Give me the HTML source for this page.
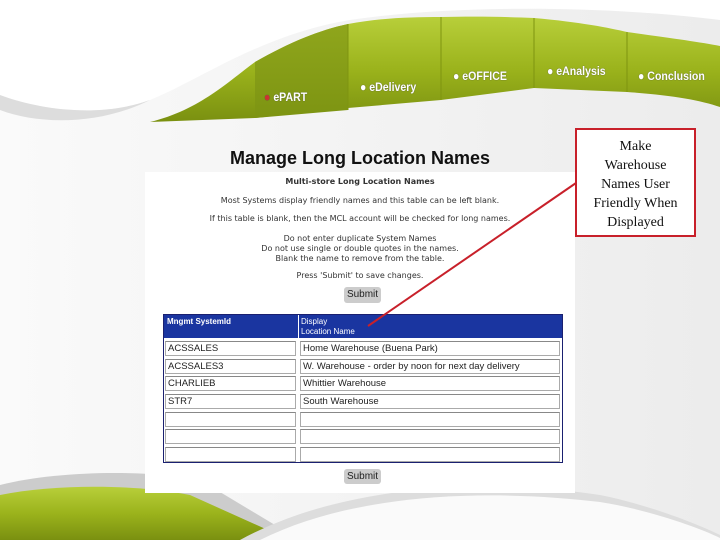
<!DOCTYPE html>
<html><head><meta charset="utf-8"><style>
*{margin:0;padding:0;box-sizing:border-box}
body{width:720px;height:540px;overflow:hidden;background:#fff;position:relative;font-family:"Liberation Sans",sans-serif}
.abs{position:absolute}
.tab{position:absolute;color:#fff;font-size:12px;font-weight:bold;text-shadow:0 0 1px #444;transform:scaleX(.88);transform-origin:left center}
.panel{position:absolute;left:145px;top:172px;width:430px;height:321px;background:#fff}
.c{text-align:center;font-family:"DejaVu Sans",sans-serif;font-size:8px;color:#333;position:absolute;left:0;width:430px}
.btn{position:absolute;background:#ccc;border-radius:3px;font-size:10px;text-align:center;color:#222}
.inp{position:absolute;border:1px solid #aaa;border-top-color:#888;background:#fff;font-size:9.5px;color:#222;padding-left:2px;height:15px;line-height:13px}
</style></head><body>
<svg class="abs" style="left:0;top:0" width="720" height="540">
<defs>
<linearGradient id="g" x1="0" y1="0" x2="0" y2="1"><stop offset="0" stop-color="#b8cf3a"/><stop offset=".5" stop-color="#9bb31c"/><stop offset="1" stop-color="#7a9010"/></linearGradient>
<linearGradient id="gd" x1="0" y1="0" x2="0" y2="1"><stop offset="0" stop-color="#8fa61c"/><stop offset="1" stop-color="#7d9412"/></linearGradient>
<linearGradient id="bg" x1="0" y1="0" x2="1" y2="0"><stop offset="0" stop-color="#fafafa"/><stop offset="1" stop-color="#ececec"/></linearGradient>
</defs>
<rect width="720" height="540" fill="url(#bg)"/>
<path d="M0 0 L720 0 L720 20 C600 5 450 5 350 20 C260 35 200 80 150 100 C100 118 40 110 0 95Z" fill="#fff"/>
<path d="M0 95 C40 110 100 118 150 100 C100 125 40 125 0 110Z" fill="#ddd"/>
<path d="M150 122 C200 110 230 80 255 62 C290 42 320 30 348 24 C380 18 410 17 441 17 C480 16 510 17 534 18 C580 22 610 28 627 32 C670 38 700 42 720 46 L720 107 C700 100 670 95 627 92 L534 88 L441 100 L348 108 L255 118Z" fill="url(#g)"/>
<path d="M255 62 C290 42 320 30 348 24 L348 110 L255 118Z" fill="url(#gd)"/>
<g stroke="#7e9410" stroke-width="1"><line x1="348" y1="24" x2="348" y2="110"/><line x1="441" y1="17" x2="441" y2="100"/><line x1="534" y1="18" x2="534" y2="88"/><line x1="627" y1="32" x2="627" y2="92"/></g>
<path d="M0 485 C60 470 150 470 200 480 L300 540 L0 540Z" fill="#ccc"/>
<path d="M0 495 C60 483 140 485 190 495 L290 540 L0 540Z" fill="url(#g)"/>
<path d="M240 540 C350 480 500 480 600 495 C650 505 700 525 720 535 L720 540Z" fill="#ddd"/>
<path d="M260 540 C360 490 500 490 600 502 C650 510 700 528 720 538 L720 540Z" fill="#fafafa"/>
</svg>
<div class="tab" style="left:264px;top:90px"><span style="color:#c33">●</span> ePART</div>
<div class="tab" style="left:360px;top:80px">● eDelivery</div>
<div class="tab" style="left:453px;top:69px">● eOFFICE</div>
<div class="tab" style="left:547px;top:64px">● eAnalysis</div>
<div class="tab" style="left:638px;top:69px">● Conclusion</div>
<div class="abs" style="left:230px;top:148px;font-size:18px;font-weight:bold;color:#111">Manage Long Location Names</div>
<div class="panel">
<div class="c" style="top:5px;font-weight:bold">Multi-store Long Location Names</div>
<div class="c" style="top:24px">Most Systems display friendly names and this table can be left blank.</div>
<div class="c" style="top:42px">If this table is blank, then the MCL account will be checked for long names.</div>
<div class="c" style="top:62px;line-height:10px">Do not enter duplicate System Names<br>Do not use single or double quotes in the names.<br>Blank the name to remove from the table.</div>
<div class="c" style="top:99px">Press 'Submit' to save changes.</div>
<div class="btn" style="left:199px;top:115px;width:37px;height:16px;line-height:16px">Submit</div>
<div class="abs" style="left:18px;top:142px;width:400px;height:149px;border:1px solid #1a2070"></div>
<div class="abs" style="left:19px;top:143px;width:398px;height:23px;background:#1a35a0"></div>
<div class="abs" style="left:153px;top:143px;width:1px;height:23px;background:#fff"></div>
<div class="abs" style="left:22px;top:145px;font-size:8px;color:#fff;font-weight:bold">Mngmt SystemId</div>
<div class="abs" style="left:156px;top:145px;font-size:8px;color:#fff;line-height:10px">Display<br>Location Name</div>
<div class="inp" style="left:20px;top:169px;width:131px">ACSSALES</div><div class="inp" style="left:155px;top:169px;width:260px">Home Warehouse (Buena Park)</div>
<div class="inp" style="left:20px;top:187px;width:131px">ACSSALES3</div><div class="inp" style="left:155px;top:187px;width:260px">W. Warehouse - order by noon for next day delivery</div>
<div class="inp" style="left:20px;top:204px;width:131px">CHARLIEB</div><div class="inp" style="left:155px;top:204px;width:260px">Whittier Warehouse</div>
<div class="inp" style="left:20px;top:222px;width:131px">STR7</div><div class="inp" style="left:155px;top:222px;width:260px">South Warehouse</div>
<div class="inp" style="left:20px;top:240px;width:131px"></div><div class="inp" style="left:155px;top:240px;width:260px"></div>
<div class="inp" style="left:20px;top:257px;width:131px"></div><div class="inp" style="left:155px;top:257px;width:260px"></div>
<div class="inp" style="left:20px;top:275px;width:131px"></div><div class="inp" style="left:155px;top:275px;width:260px"></div>
<div class="btn" style="left:199px;top:297px;width:37px;height:15px;line-height:15px">Submit</div>
</div>
<div class="abs" style="left:575px;top:128px;width:121px;height:109px;border:2px solid #c8202a;background:#fff;text-align:center;font-family:'Liberation Serif',serif;font-size:14px;line-height:19px;padding-top:7px;color:#111">Make<br>Warehouse<br>Names User<br>Friendly When<br>Displayed</div>
<svg class="abs" style="left:0;top:0" width="720" height="540"><line x1="576" y1="183" x2="368" y2="326" stroke="#c8202a" stroke-width="2"/></svg>
</body></html>
